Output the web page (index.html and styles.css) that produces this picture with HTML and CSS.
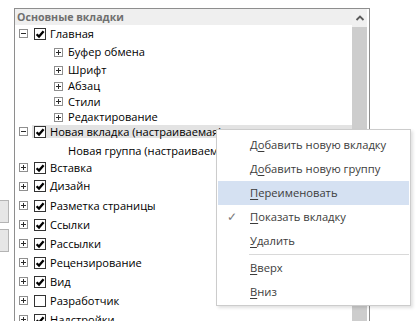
FILE: index.html
```html
<!DOCTYPE html>
<html lang="ru">
<head>
<meta charset="utf-8">
<title>Основные вкладки</title>
<link rel="stylesheet" href="styles.css">
</head>
<body>
<div class="page">
  <div class="side">
    <div class="side-btn"></div>
    <div class="side-btn"></div>
  </div>
  <div class="listbox">
    <div class="list">
      <div class="list-head">Основные вкладки</div>
      <div class="row tab h17"><span class="exp minus"></span><span class="cb on"><svg viewBox="0 0 10 10"><path d="M1.6 5.2 L4 7.6 L8.6 2.2"/></svg></span><span class="label">Главная</span></div>
      <div class="row group h20"><span class="exp plus"></span><span class="label">Буфер обмена</span></div>
      <div class="row group h16"><span class="exp plus"></span><span class="label">Шрифт</span></div>
      <div class="row group h16"><span class="exp plus"></span><span class="label">Абзац</span></div>
      <div class="row group h15"><span class="exp plus"></span><span class="label">Стили</span></div>
      <div class="row group h16"><span class="exp plus"></span><span class="label">Редактирование</span></div>
      <div class="row tab h13 sel"><span class="exp minus"></span><span class="cb on"><svg viewBox="0 0 10 10"><path d="M1.6 5.2 L4 7.6 L8.6 2.2"/></svg></span><span class="label">Новая вкладка (настраиваемая)</span></div>
      <div class="row group leaf h21"><span class="label">Новая группа (настраиваемая)</span></div>
      <div class="row tab h17"><span class="exp plus"></span><span class="cb on"><svg viewBox="0 0 10 10"><path d="M1.6 5.2 L4 7.6 L8.6 2.2"/></svg></span><span class="label">Вставка</span></div>
      <div class="row tab h20"><span class="exp plus"></span><span class="cb on"><svg viewBox="0 0 10 10"><path d="M1.6 5.2 L4 7.6 L8.6 2.2"/></svg></span><span class="label">Дизайн</span></div>
      <div class="row tab"><span class="exp plus"></span><span class="cb on"><svg viewBox="0 0 10 10"><path d="M1.6 5.2 L4 7.6 L8.6 2.2"/></svg></span><span class="label">Разметка страницы</span></div>
      <div class="row tab"><span class="exp plus"></span><span class="cb on"><svg viewBox="0 0 10 10"><path d="M1.6 5.2 L4 7.6 L8.6 2.2"/></svg></span><span class="label">Ссылки</span></div>
      <div class="row tab"><span class="exp plus"></span><span class="cb on"><svg viewBox="0 0 10 10"><path d="M1.6 5.2 L4 7.6 L8.6 2.2"/></svg></span><span class="label">Рассылки</span></div>
      <div class="row tab"><span class="exp plus"></span><span class="cb on"><svg viewBox="0 0 10 10"><path d="M1.6 5.2 L4 7.6 L8.6 2.2"/></svg></span><span class="label">Рецензирование</span></div>
      <div class="row tab"><span class="exp plus"></span><span class="cb on"><svg viewBox="0 0 10 10"><path d="M1.6 5.2 L4 7.6 L8.6 2.2"/></svg></span><span class="label">Вид</span></div>
      <div class="row tab"><span class="exp plus"></span><span class="cb"></span><span class="label">Разработчик</span></div>
      <div class="row tab"><span class="exp plus"></span><span class="cb on"><svg viewBox="0 0 10 10"><path d="M1.6 5.2 L4 7.6 L8.6 2.2"/></svg></span><span class="label">Надстройки</span></div>
    </div>
    <div class="scrollbar">
      <div class="sb-up"><svg viewBox="0 0 10 6"><path d="M1.5 5 L5 1.6 L8.5 5"/></svg></div>
      <div class="sb-thumb"></div>
    </div>
  </div>
  <div class="menu">
    <div class="mi">Д<u>о</u>бавить новую вкладку</div>
    <div class="mi">Д<u>о</u>бавить новую группу</div>
    <div class="mi hot"><u>П</u>ереименовать</div>
    <div class="mi checked"><span class="tick">✓</span><u>П</u>оказать вкладку</div>
    <div class="mi"><u>У</u>далить</div>
    <div class="sep"></div>
    <div class="mi"><u>В</u>верх</div>
    <div class="mi"><u>В</u>низ</div>
  </div>
</div>
</body>
</html>
```

FILE: styles.css
```css
* { box-sizing: border-box; }
html, body { margin: 0; padding: 0; background: #fff; }
body {
  font-family: "Open Sans", "Noto Sans", sans-serif;
  font-size: 11.1px;
  color: #000;
}
.page {
  position: relative;
  width: 420px;
  height: 321px;
  overflow: hidden;
  display: flex;
  align-items: flex-start;
}
.side {
  width: 14px;
  padding-top: 200px;
  display: flex;
  flex-direction: column;
  gap: 6px;
}
.side-btn {
  width: 9px;
  height: 23px;
  background: #e6e6e6;
  border: 1px solid #b4b4b4;
  border-left: none;
}
.listbox {
  margin-top: 8px;
  width: 356px;
  height: 330px;
  border: 1px solid #8e8e8e;
  border-bottom: none;
  display: flex;
}
.list { flex: 1; min-width: 0; overflow: hidden; }
.list-head {
  height: 16px;
  line-height: 16px;
  background: #efefef;
  font-weight: 700;
  font-size: 10.6px;
  color: #6f6f6f;
  padding-left: 2px;
  white-space: nowrap;
}
.row {
  display: flex;
  align-items: center;
  height: 19px;
  white-space: nowrap;
}
.h13 { height: 13px; }
.h15 { height: 15px; }
.h16 { height: 16px; }
.h17 { height: 17px; }
.h20 { height: 20px; }
.h21 { height: 21px; }
.label { line-height: 12px; }
.tab { padding-left: 4px; }
.tab .exp { margin-right: 6px; }
.tab .label { padding-left: 1px; }
.group { padding-left: 39px; }
.group .exp { margin-right: 5px; }
.group.leaf { padding-left: 53px; padding-top: 4px; }
.sel { background: linear-gradient(to right, transparent 17px, #e3e3e3 17px); }
.exp {
  position: relative;
  flex: none;
  width: 9px;
  height: 9px;
  border: 1px solid #8f8f8f;
  background: #fff;
}
.exp::before {
  content: "";
  position: absolute;
  left: 1px;
  top: 3px;
  width: 5px;
  height: 1px;
  background: #2b2b2b;
}
.exp.plus::after {
  content: "";
  position: absolute;
  left: 3px;
  top: 1px;
  width: 1px;
  height: 5px;
  background: #2b2b2b;
}
.cb {
  flex: none;
  width: 12px;
  height: 12px;
  border: 1px solid #333;
  background: #fff;
  margin-right: 3px;
  display: flex;
}
.cb svg { width: 10px; height: 10px; }
.cb path { fill: none; stroke: #000; stroke-width: 2.3; }
.scrollbar {
  flex: none;
  width: 17px;
  display: flex;
  flex-direction: column;
  padding-right: 2px;
}
.sb-up {
  height: 18px;
  background: #f0f0f0;
  display: flex;
  align-items: center;
  justify-content: center;
}
.sb-up svg { width: 10px; height: 6px; }
.sb-up path { fill: none; stroke: #5a5a5a; stroke-width: 1.8; }
.sb-thumb { flex: 1; background: #cdcdcd; }
.menu {
  position: absolute;
  left: 216px;
  top: 129px;
  width: 195px;
  border: 1px solid #cccccc;
  background: #fff;
  padding: 3px 1px 1px 1px;
  box-shadow: 2px 2px 3px rgba(0, 0, 0, 0.12);
  color: #3c3c3c;
  font-size: 11.2px;
}
.mi {
  position: relative;
  height: 24px;
  line-height: 24px;
  padding-left: 32px;
  white-space: nowrap;
}
.mi u { text-decoration-thickness: 1px; text-underline-offset: 2px; }
.mi.hot { background: #d5e1f2; }
.tick {
  position: absolute;
  left: 9px;
  top: 0;
  color: #7a7a7a;
  font-size: 12px;
}
.sep {
  height: 3px;
  margin-left: 31px;
  display: flex;
  align-items: center;
}
.sep::before {
  content: "";
  flex: 1;
  height: 1px;
  background: #d9d9d9;
}
```
